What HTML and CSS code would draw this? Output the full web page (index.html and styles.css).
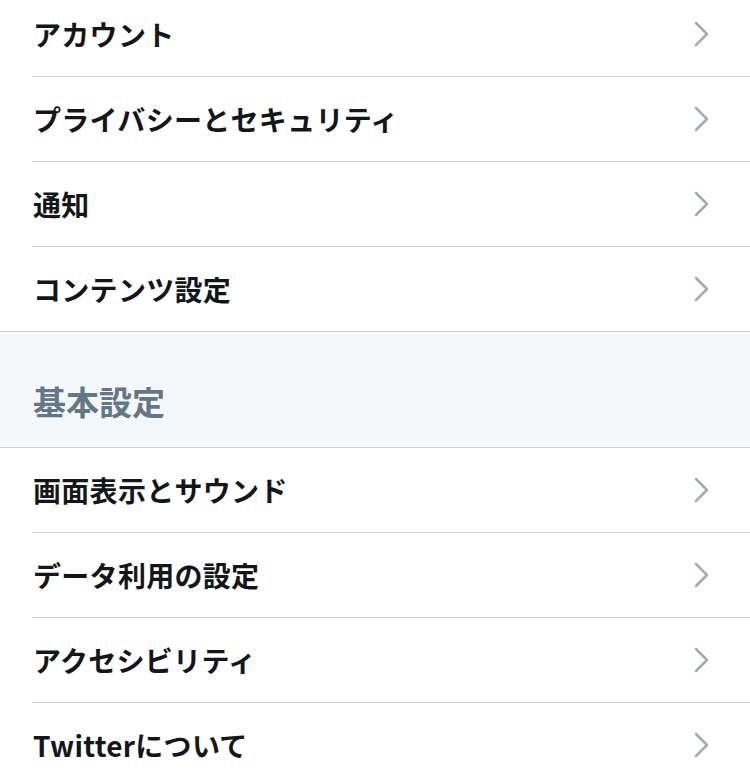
FILE: index.html
```html
<!DOCTYPE html>
<html lang="ja">
<head>
    <meta charset="UTF-8">
    <meta name="viewport" content="width=device-width, initial-scale=1.0">
    <title>設定</title>
    <link rel="stylesheet" href="styles.css">
</head>
<body>

    <main class="settings">
        <ul class="settings-list">
            <li class="settings-item">
                <span>アカウント</span>
                <svg class="chevron" viewBox="0 0 16 26"><path d="M2 2 L13 13 L2 24"/></svg>
            </li>
            <li class="settings-item">
                <span>プライバシーとセキュリティ</span>
                <svg class="chevron" viewBox="0 0 16 26"><path d="M2 2 L13 13 L2 24"/></svg>
            </li>
            <li class="settings-item">
                <span>通知</span>
                <svg class="chevron" viewBox="0 0 16 26"><path d="M2 2 L13 13 L2 24"/></svg>
            </li>
            <li class="settings-item last">
                <span>コンテンツ設定</span>
                <svg class="chevron" viewBox="0 0 16 26"><path d="M2 2 L13 13 L2 24"/></svg>
            </li>
        </ul>

        <!-- General section -->
        <h2 class="section-title">基本設定</h2>

        <ul class="settings-list">
            <li class="settings-item">
                <span>画面表示とサウンド</span>
                <svg class="chevron" viewBox="0 0 16 26"><path d="M2 2 L13 13 L2 24"/></svg>
            </li>
            <li class="settings-item">
                <span>データ利用の設定</span>
                <svg class="chevron" viewBox="0 0 16 26"><path d="M2 2 L13 13 L2 24"/></svg>
            </li>
            <li class="settings-item">
                <span>アクセシビリティ</span>
                <svg class="chevron" viewBox="0 0 16 26"><path d="M2 2 L13 13 L2 24"/></svg>
            </li>
            <li class="settings-item">
                <span>Twitterについて</span>
                <svg class="chevron" viewBox="0 0 16 26"><path d="M2 2 L13 13 L2 24"/></svg>
            </li>
        </ul>
    </main>

</body>
</html>
```

FILE: styles.css
```css
body {
    font-family: "Noto Sans CJK JP", "Noto Sans", sans-serif;
    margin: 0;
    padding: 0;
    background-color: #fff;
    color: #14171a;
    overflow: hidden;
}

.settings {
    margin-top: -8px;
}

.settings-list {
    list-style: none;
    margin: 0;
    padding: 0 0 0 32px;
}

.settings-item {
    display: flex;
    align-items: center;
    justify-content: space-between;
    height: 84px;
    padding-left: 1px;
    padding-right: 40px;
    border-bottom: 1px solid #cdd2d6;
    font-size: 28px;
    font-weight: 700;
    letter-spacing: 0.3px;
}

.settings-item.last {
    border-bottom: none;
}

.chevron {
    width: 16px;
    height: 26px;
    fill: none;
    stroke: #a2acb5;
    stroke-width: 2.6;
    stroke-linecap: round;
    stroke-linejoin: round;
}

.section-title {
    margin: 0;
    height: 117px;
    box-sizing: border-box;
    padding: 43px 0 0 33px;
    background-color: #f5f8fa;
    border-top: 1px solid #cdd2d6;
    border-bottom: 1px solid #cdd2d6;
    color: #657786;
    font-size: 33px;
    font-weight: 700;
    line-height: 52px;
}
```
